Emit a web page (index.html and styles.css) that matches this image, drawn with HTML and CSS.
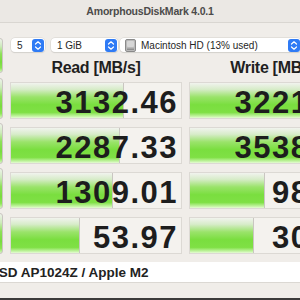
FILE: index.html
```html
<!DOCTYPE html>
<html lang="en">
<head>
    <meta charset="UTF-8">
    <title>AmorphousDiskMark 4.0.1</title>
    <link rel="stylesheet" href="styles.css">
</head>
<body>
    <div class="window">
        <div class="titlebar">AmorphousDiskMark 4.0.1</div>

        <div class="board">
            <div class="side-btn all-btn"></div>

            <div class="controls">
                <div class="select count">
                    <span class="label">5</span>
                    <svg class="stepper" viewBox="0 0 12 13"><rect width="12" height="13" rx="3" fill="#2f7bf5"/><path d="M3.5 5 L6 2.8 L8.5 5 M3.5 8 L6 10.2 L8.5 8" stroke="#fff" stroke-width="1.2" fill="none" stroke-linecap="round" stroke-linejoin="round"/></svg>
                </div>
                <div class="select size">
                    <span class="label">1 GiB</span>
                    <svg class="stepper" viewBox="0 0 12 13"><rect width="12" height="13" rx="3" fill="#2f7bf5"/><path d="M3.5 5 L6 2.8 L8.5 5 M3.5 8 L6 10.2 L8.5 8" stroke="#fff" stroke-width="1.2" fill="none" stroke-linecap="round" stroke-linejoin="round"/></svg>
                </div>
                <div class="select disk">
                    <svg class="disk-icon" viewBox="0 0 11 13"><rect x="0.5" y="0.5" width="10" height="12" rx="1.5" fill="#b9b9b9" stroke="#8a8a8a"/><rect x="2" y="2" width="7" height="6" rx="1" fill="#d6d6d6"/><line x1="2" y1="10.2" x2="9" y2="10.2" stroke="#7a7a7a"/></svg>
                    <span class="label">Macintosh HD (13% used)</span>
                    <svg class="stepper" viewBox="0 0 12 13"><rect width="12" height="13" rx="3" fill="#2f7bf5"/><path d="M3.5 5 L6 2.8 L8.5 5 M3.5 8 L6 10.2 L8.5 8" stroke="#fff" stroke-width="1.2" fill="none" stroke-linecap="round" stroke-linejoin="round"/></svg>
                </div>
            </div>

            <div class="head">Read [MB/s]</div>
            <div class="head">Write [MB/s]</div>

            <div class="side-btn"></div>
            <div class="cell"><div class="bar" style="width: 112px"></div><span class="num">3132.46</span></div>
            <div class="cell"><div class="bar" style="width: 113px"></div><span class="num">3221.16</span></div>

            <div class="side-btn"></div>
            <div class="cell"><div class="bar" style="width: 108px"></div><span class="num">2287.33</span></div>
            <div class="cell"><div class="bar" style="width: 115px"></div><span class="num">3538.52</span></div>

            <div class="side-btn"></div>
            <div class="cell"><div class="bar" style="width: 101px"></div><span class="num">1309.01</span></div>
            <div class="cell"><div class="bar" style="width: 74px"></div><span class="num">98.87</span></div>

            <div class="side-btn"></div>
            <div class="cell"><div class="bar" style="width: 68px"></div><span class="num">53.97</span></div>
            <div class="cell"><div class="bar" style="width: 63px"></div><span class="num">30.45</span></div>

            <div class="comment">APPLE SSD AP1024Z / Apple M2</div>
        </div>
    </div>
</body>
</html>
```

FILE: styles.css
```css
body {
    margin: 0;
    width: 300px;
    height: 300px;
    overflow: hidden;
    font-family: "Liberation Sans", Arial, sans-serif;
    background-color: #f0ede9;
}
.window {
    height: 298px;
    border-bottom: 2px solid #3c3b3a;
}
.titlebar {
    height: 22px;
    line-height: 22px;
    background-color: #ebe8e4;
    border-bottom: 1px solid #d9d6d1;
    text-align: center;
    font-size: 10.5px;
    letter-spacing: -0.2px;
    font-weight: bold;
    color: #4c4b4a;
}
.board {
    display: grid;
    grid-template-columns: 60px 172px 172px;
    grid-template-rows: 14px 30px repeat(4, 45px) 21px;
    column-gap: 7px;
    margin: 15px 0 0 -57px;
    width: 430px;
}
.side-btn {
    height: 41px;
    margin-top: -4px;
    border: 1px solid #c9c6c1;
    border-radius: 3px;
    background: linear-gradient(to bottom, #eef2ea 0%, #cdeabb 22%, #8ee058 45%, #79dc3e 70%, #8be453 88%, #d6f6bf 100%);
    box-sizing: border-box;
}
.all-btn {
    grid-row: 1 / 3;
    height: 35px;
    margin-top: 0;
}
.controls {
    grid-column: 2 / 4;
    display: flex;
    margin-left: 1px;
}
.select {
    display: flex;
    align-items: center;
    gap: 5px;
    height: 14px;
    padding: 0 1px 0 6px;
    box-sizing: border-box;
    background-color: #fff;
    border-radius: 4px;
    box-shadow: 0 0 0 0.5px #d4d1cc, 0 1px 1px rgba(0, 0, 0, 0.12);
    font-size: 10px;
    color: #262626;
}
.label {
    flex: 1;
    white-space: nowrap;
}
.count { width: 34px; }
.size {
    width: 67px;
    margin-left: 6px;
}
.disk {
    width: 181px;
    margin-left: 2px;
    padding-left: 5px;
}
.stepper {
    width: 12px;
    height: 13px;
    flex-shrink: 0;
}
.disk-icon {
    width: 11px;
    height: 13px;
    flex-shrink: 0;
}
.head {
    align-self: end;
    padding-bottom: 5px;
    text-align: center;
    font-size: 16px;
    letter-spacing: -0.3px;
    font-weight: bold;
    color: #1f1f1f;
}
.head:nth-of-type(1) { grid-column: 2; }
.cell {
    position: relative;
    height: 37px;
    border: 1px solid #dcd9d4;
    background-color: #f4f2ee;
    box-sizing: border-box;
    overflow: hidden;
}
.bar {
    height: 100%;
    border-right: 1px solid #c9c6c1;
    background: linear-gradient(to bottom, #f1f3ee 0%, #d7ecc9 18%, #9ae36a 40%, #7ade3f 62%, #7fe045 84%, #c9f5ab 96%, #e6fbd6 100%);
}
.num {
    position: absolute;
    right: 3px;
    top: 1px;
    line-height: 37px;
    font-size: 31px;
    font-weight: bold;
    letter-spacing: 1.5px;
    color: #1d1d1d;
}
.comment {
    grid-column: 1 / 4;
    height: 21px;
    line-height: 21px;
    background-color: #fff;
    border-bottom: 1px solid #dbd8d3;
    box-sizing: border-box;
    text-indent: -2px;
    font-size: 13.5px;
    font-weight: bold;
    color: #222;
}
```
